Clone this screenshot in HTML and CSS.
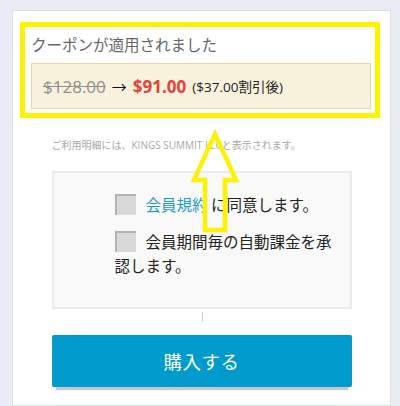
FILE: index.html
```html
<!DOCTYPE html>
<html lang="ja">
<head>
<meta charset="utf-8">
<title>購入</title>
<link rel="stylesheet" href="styles.css">
</head>
<body>
<div class="page">
  <div class="card">
    <section class="coupon">
      <h2 class="coupon-title">クーポンが適用されました</h2>
      <div class="price-box">
        <span class="old">$128.00</span>
        <span class="arrow">→</span>
        <span class="new">$91.00</span>
        <span class="discount">($37.00割引後)</span>
      </div>
    </section>
    <div class="column">
      <p class="note">ご利用明細には、KINGS SUMMIT LLCと表示されます。</p>
      <div class="agree-box">
        <p class="agree"><span class="check"></span><a class="terms" href="#">会員規約</a> に同意します。</p>
        <p class="agree second"><span class="check"></span>会員期間毎の自動課金を承認します。</p>
      </div>
      <div class="caret"></div>
      <button class="buy" type="button">購入する</button>
    </div>
  </div>
</div>
<div class="highlight"></div>
<svg class="pointer" width="400" height="406" viewBox="0 0 400 406">
  <polygon points="215,134 236,180 225,180 225,230 205,230 205,180 194,180" fill="none" stroke="#fff200" stroke-width="4.5" stroke-linejoin="miter" stroke-miterlimit="10"/>
</svg>
</body>
</html>
```

FILE: styles.css
```css
html, body {
  margin: 0;
  padding: 0;
  height: 406px;
  overflow: hidden;
  background: #e9ecf4;
}

body {
  font-family: "Open Sans", "Noto Sans CJK JP", sans-serif;
  color: #222;
}

.page {
  padding: 10px 9px 0 12px;
}

.card {
  width: 377px;
  height: 394px;
  overflow: hidden;
  background: #fff;
  border: 1px solid #dcdfe6;
}

.coupon {
  padding: 22px 19px 0 18px;
}

.coupon-title {
  margin: 0;
  font-size: 15.5px;
  line-height: 22px;
  font-weight: normal;
  color: #666;
  font-family: "Noto Sans CJK JP", sans-serif;
}

.price-box {
  margin-top: 8px;
  height: 44px;
  border: 1px solid #ead8a4;
  background: #f8f1dc;
  display: flex;
  align-items: center;
  padding-left: 11px;
  white-space: pre;
}

.old {
  font-size: 17px;
  color: #8f8f8f;
  text-decoration: line-through;
}

.arrow {
  font-size: 15px;
  color: #111;
  margin: 0 6px;
}

.new {
  font-size: 17px;
  font-weight: bold;
  color: #e8403a;
  margin-right: 6px;
}

.discount {
  font-size: 13.5px;
  color: #222;
}

.column {
  width: 300px;
  margin: 0 auto;
}

.note {
  margin: 29px 0 0;
  font-size: 10px;
  line-height: 14px;
  color: #a8a8a8;
  white-space: nowrap;
}

.agree-box {
  margin-top: 19px;
  border: 2px solid #ebebeb;
  background: #f9f9f9;
  padding: 19px 9px 30px 61px;
}

.agree {
  margin: 0;
  font-family: "Noto Sans CJK JP", sans-serif;
  font-size: 15.5px;
  line-height: 24px;
  color: #222;
}

.agree.second {
  margin-top: 13px;
}

.check {
  display: inline-block;
  width: 19px;
  height: 19px;
  background: #d9d9d9;
  border-top: 2px solid #b3b3b3;
  border-left: 2px solid #b3b3b3;
  vertical-align: -4px;
  margin-right: 10px;
}

.terms {
  color: #1f9ad6;
  text-decoration: none;
}

.caret {
  width: 1px;
  height: 10px;
  background: #c6cce0;
  margin: 3px 0 0 150px;
}

.buy {
  display: block;
  width: 300px;
  height: 52px;
  margin-top: 13px;
  border: none;
  border-radius: 2px;
  background: #009bcc;
  color: #fff;
  font-family: "Noto Sans CJK JP", sans-serif;
  font-size: 18.5px;
  letter-spacing: 0.5px;
  box-shadow: 0 7px 1px -4px rgba(0, 0, 0, 0.22);
}

.highlight {
  position: absolute;
  left: 20px;
  top: 22px;
  width: 360px;
  height: 96px;
  box-sizing: border-box;
  border: 5px solid #fff200;
}

.pointer {
  position: absolute;
  left: 0;
  top: 0;
  pointer-events: none;
}
```
